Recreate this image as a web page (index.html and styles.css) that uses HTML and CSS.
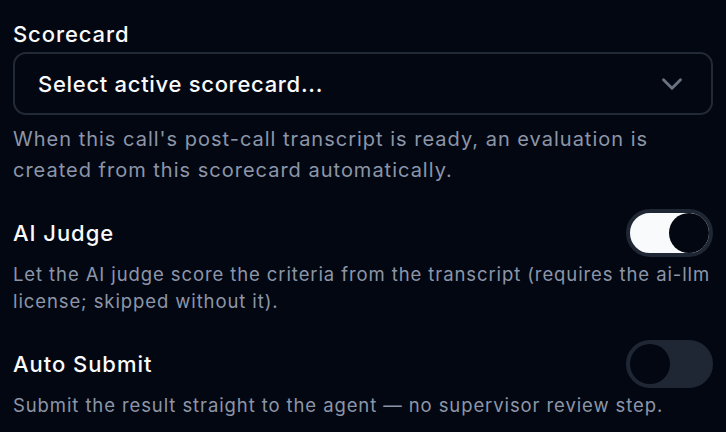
FILE: index.html
```html
<!DOCTYPE html>
<html lang="en">
<head>
<meta charset="utf-8">
<title>Scorecard settings</title>
<link rel="stylesheet" href="styles.css">
</head>
<body>
<div class="panel">
  <section class="field">
    <label class="field-label">Scorecard</label>
    <button class="select" type="button">
      <span class="select-value">Select active scorecard...</span>
      <svg class="chevron" viewBox="0 0 24 24" fill="none" stroke="currentColor" stroke-width="2" stroke-linecap="round" stroke-linejoin="round"><path d="m6 9 6 6 6-6"/></svg>
    </button>
    <p class="help">When this call's post-call transcript is ready, an evaluation is created from this scorecard automatically.</p>
  </section>

  <section class="setting">
    <div class="setting-head">
      <span class="setting-title">AI Judge</span>
      <span class="switch on"><span class="knob"></span></span>
    </div>
    <p class="desc">Let the AI judge score the criteria from the transcript (requires the ai-llm license; skipped without it).</p>
  </section>

  <section class="setting">
    <div class="setting-head">
      <span class="setting-title">Auto Submit</span>
      <span class="switch off"><span class="knob"></span></span>
    </div>
    <p class="desc">Submit the result straight to the agent — no supervisor review step.</p>
  </section>
</div>
</body>
</html>
```
FILE: styles.css
```css
html, body {
  margin: 0;
  padding: 0;
  background: #030712;
}
body {
  font-family: Inter, "Noto Sans", sans-serif;
  color: #f9fafb;
}
.panel {
  padding: 20px 13px 0 13px;
  display: flex;
  flex-direction: column;
}
.field {
  display: flex;
  flex-direction: column;
}
.field-label {
  font-size: 22px;
  font-weight: 500;
  line-height: 28px;
  letter-spacing: 0.9px;
  margin-bottom: 4px;
}
.select {
  display: flex;
  align-items: center;
  justify-content: space-between;
  height: 63px;
  box-sizing: border-box;
  border: 2px solid #232a37;
  border-radius: 13px;
  background: transparent;
  padding: 0 22px 0 23px;
  color: #f9fafb;
  font-family: inherit;
  text-align: left;
  margin: 0;
}
.select-value {
  font-size: 22px;
  font-weight: 500;
  letter-spacing: 0.7px;
}
.chevron {
  width: 34px;
  height: 34px;
  color: #6b7280;
}
.help {
  margin: 9px 0 0 0;
  font-size: 20px;
  line-height: 30.6px;
  letter-spacing: 1px;
  color: #8c96a8;
}
.setting {
  margin-top: 24px;
  display: flex;
  flex-direction: column;
}
.setting + .setting {
  margin-top: 26px;
}
.setting-head {
  display: flex;
  align-items: center;
  justify-content: space-between;
  height: 48px;
}
.setting-title {
  font-size: 22px;
  font-weight: 500;
  letter-spacing: 0.95px;
}
.desc {
  margin: 4px 0 0 0;
  font-size: 18.5px;
  line-height: 26.5px;
  letter-spacing: 0.9px;
  color: #8c96a8;
}
.switch {
  width: 87px;
  height: 48px;
  box-sizing: border-box;
  border: 4px solid #1f2634;
  border-radius: 999px;
  display: flex;
  align-items: center;
}
.switch.on {
  background: #f9fafb;
  justify-content: flex-end;
}
.switch.off {
  background: #1f2634;
  justify-content: flex-start;
}
.knob {
  width: 40px;
  height: 40px;
  border-radius: 50%;
  background: #030712;
}
```
